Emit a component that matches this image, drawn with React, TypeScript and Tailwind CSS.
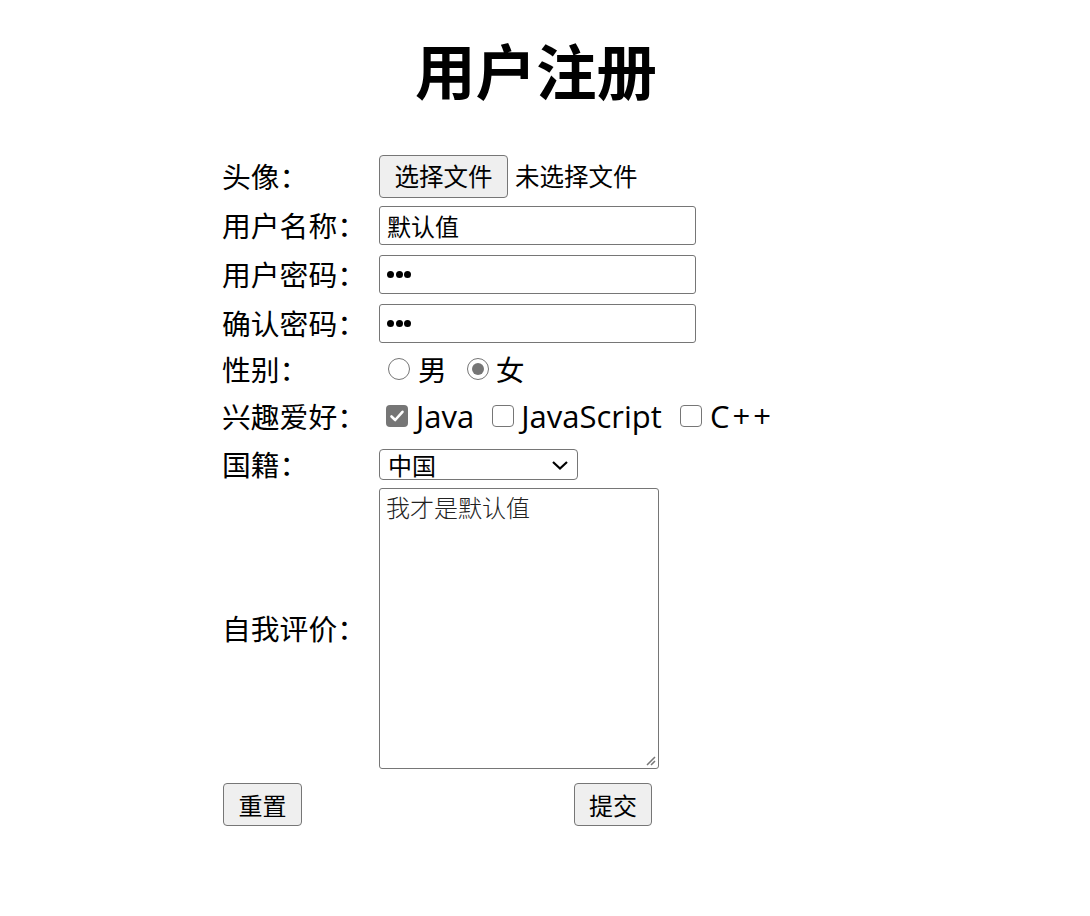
const cjk = "font-['Noto_Sans_CJK_SC',sans-serif]";
const latin = "font-['Open_Sans','Noto_Sans_CJK_SC',sans-serif]";

function Label({ children }: { children: React.ReactNode }) {
  return <div className="w-[157px] shrink-0 text-[28.8px] leading-none">{children}</div>;
}

function Radio({ checked }: { checked?: boolean }) {
  return (
    <span className="flex h-[22px] w-[22px] items-center justify-center rounded-full border-[1.8px] border-[#767676] bg-white">
      {checked && <span className="block h-[12px] w-[12px] rounded-full bg-[#767676]" />}
    </span>
  );
}

function Checkbox({ checked }: { checked?: boolean }) {
  if (checked) {
    return (
      <span className="flex h-[22px] w-[22px] items-center justify-center rounded-[4px] bg-[#767676]">
        <svg width="16" height="16" viewBox="0 0 16 16">
          <path d="M2.5 8.5 L6.2 12 L13.5 3.8" fill="none" stroke="white" strokeWidth="2.6" strokeLinecap="round" strokeLinejoin="round" />
        </svg>
      </span>
    );
  }
  return <span className="block h-[22px] w-[22px] rounded-[4px] border-[1.8px] border-[#767676] bg-white" />;
}

function Dots() {
  return (
    <span className="flex items-center gap-[1.5px]">
      <span className="block h-[7px] w-[7px] rounded-full bg-black" />
      <span className="block h-[7px] w-[7px] rounded-full bg-black" />
      <span className="block h-[7px] w-[7px] rounded-full bg-black" />
    </span>
  );
}

export default function App() {
  return (
    <div className={`min-h-screen bg-white text-black ${cjk}`}>
      <h1 className="pt-[31px] pr-[18px] text-center text-[60.5px] leading-[76px] font-bold">用户注册</h1>

      <div className="ml-[222px] mt-[45px] flex flex-col">
        {/* 头像 */}
        <div className="flex h-[49px] items-center">
          <Label>头像：</Label>
          <div className="flex items-center text-[24.5px]">
            <span className="flex h-[43px] w-[129px] items-center justify-center rounded-[4px] border border-[#767676] bg-[#efefef]">
              选择文件
            </span>
            <span className="ml-[7px]">未选择文件</span>
          </div>
        </div>

        {/* 用户名称 */}
        <div className="flex h-[49px] items-center">
          <Label>用户名称：</Label>
          <div className="flex h-[39px] w-[317px] items-center rounded-[3px] border border-[#767676] px-[7px] text-[24px]">
            默认值
          </div>
        </div>

        {/* 用户密码 */}
        <div className="flex h-[49px] items-center">
          <Label>用户密码：</Label>
          <div className="flex h-[39px] w-[317px] items-center rounded-[3px] border border-[#767676] px-[7px]">
            <Dots />
          </div>
        </div>

        {/* 确认密码 */}
        <div className="flex h-[49px] items-center">
          <Label>确认密码：</Label>
          <div className="flex h-[39px] w-[317px] items-center rounded-[3px] border border-[#767676] px-[7px]">
            <Dots />
          </div>
        </div>

        {/* 性别 */}
        <div className="flex h-[42px] items-center">
          <Label>性别：</Label>
          <div className="flex items-center text-[28.8px] leading-none">
            <span className="ml-[9px]"><Radio /></span>
            <span className="ml-[8px]">男</span>
            <span className="ml-[20px]"><Radio checked /></span>
            <span className="ml-[7px]">女</span>
          </div>
        </div>

        {/* 兴趣爱好 */}
        <div className="flex h-[52px] items-center">
          <Label>兴趣爱好：</Label>
          <div className={`flex items-center text-[31px] leading-none ${latin}`}>
            <span className="ml-[7px]"><Checkbox checked /></span>
            <span className="ml-[8px]">Java</span>
            <span className="ml-[18px]"><Checkbox /></span>
            <span className="ml-[7px]">JavaScript</span>
            <span className="ml-[18px]"><Checkbox /></span>
            <span className="ml-[8px] tracking-[3px]">C++</span>
          </div>
        </div>

        {/* 国籍 */}
        <div className="flex h-[45px] items-center">
          <Label>国籍：</Label>
          <div className="flex h-[31px] w-[199px] items-center justify-between rounded-[4px] border border-[#767676] pl-[8px] pr-[8px] text-[24px]">
            <span>中国</span>
            <svg width="18" height="12" viewBox="0 0 18 12">
              <path d="M2 3 L9 9.5 L16 3" fill="none" stroke="black" strokeWidth="2.2" />
            </svg>
          </div>
        </div>

        {/* 自我评价 */}
        <div className="flex items-center pt-[1px]">
          <Label>自我评价：</Label>
          <div className="relative h-[281px] w-[280px] rounded-[3px] border border-[#767676] px-[6px] pt-[3px] text-[24px] leading-[30px] text-[#222] font-light">
            我才是默认值
            <svg className="absolute bottom-[2px] right-[2px]" width="12" height="12" viewBox="0 0 12 12">
              <path d="M11 3 L3 11 M11 7 L7 11" stroke="#777" strokeWidth="1.5" />
            </svg>
          </div>
        </div>

        {/* 按钮 */}
        <div className="mt-[14px] flex items-center text-[24px]">
          <span className="ml-[1px] flex h-[43px] w-[79px] items-center justify-center rounded-[4px] border border-[#767676] bg-[#efefef]">
            重置
          </span>
          <span className="ml-[272px] flex h-[43px] w-[78px] items-center justify-center rounded-[4px] border border-[#767676] bg-[#efefef]">
            提交
          </span>
        </div>
      </div>
    </div>
  );
}
